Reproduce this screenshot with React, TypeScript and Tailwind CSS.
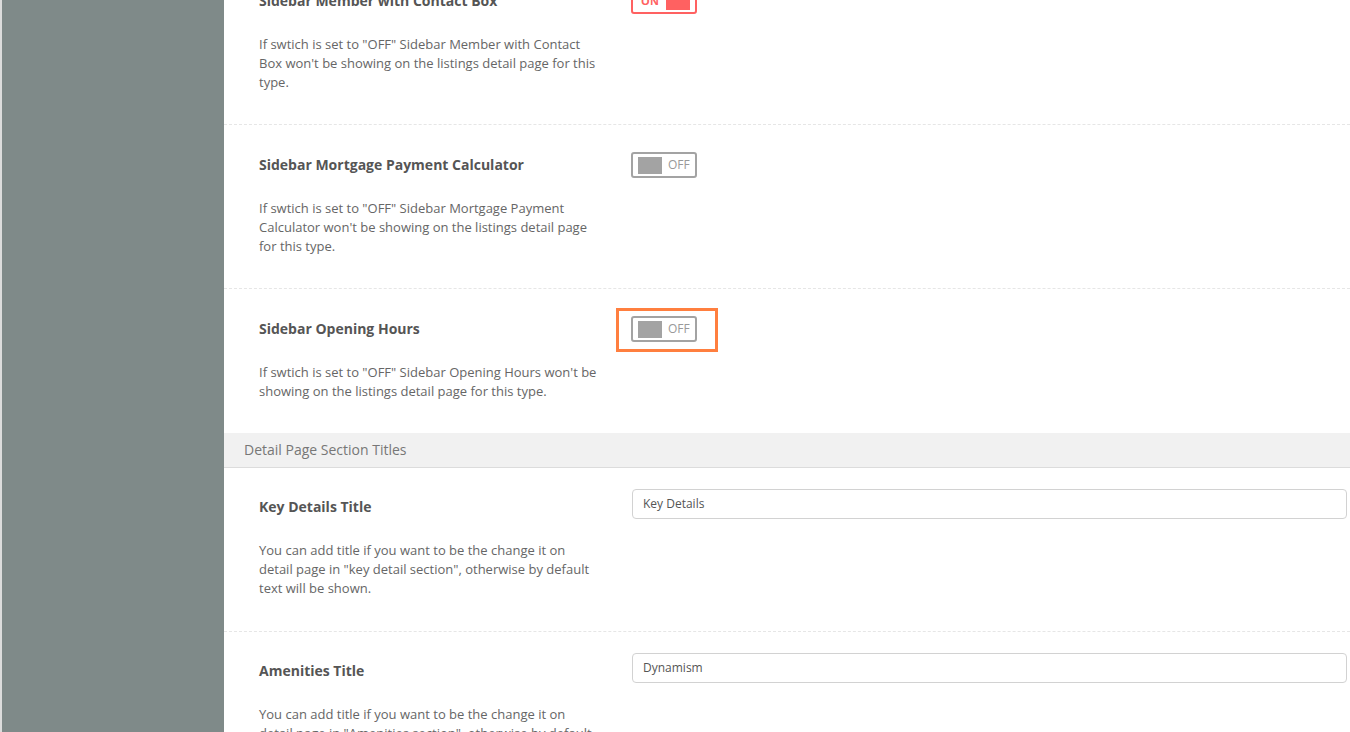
const font = { fontFamily: "'Open Sans', sans-serif" };

type Row = {
  title: string;
  desc: string;
  kind: "on" | "off" | "input";
  value?: string;
  highlight?: boolean;
};

const topRows: Row[] = [
  {
    title: "Sidebar Member with Contact Box",
    desc: 'If swtich is set to "OFF" Sidebar Member with Contact Box won\'t be showing on the listings detail page for this type.',
    kind: "on",
  },
  {
    title: "Sidebar Mortgage Payment Calculator",
    desc: 'If swtich is set to "OFF" Sidebar Mortgage Payment Calculator won\'t be showing on the listings detail page for this type.',
    kind: "off",
  },
  {
    title: "Sidebar Opening Hours",
    desc: 'If swtich is set to "OFF" Sidebar Opening Hours won\'t be showing on the listings detail page for this type.',
    kind: "off",
    highlight: true,
  },
];

const titleRows: Row[] = [
  {
    title: "Key Details Title",
    desc: 'You can add title if you want to be the change it on detail page in "key detail section", otherwise by default text will be shown.',
    kind: "input",
    value: "Key Details",
  },
  {
    title: "Amenities Title",
    desc: 'You can add title if you want to be the change it on detail page in "Amenities section", otherwise by default text will be shown.',
    kind: "input",
    value: "Dynamism",
  },
];

function Toggle({ on }: { on: boolean }) {
  if (on) {
    return (
      <div className="w-[66px] h-[26px] border-2 border-[#ff6161] rounded-[3px] flex items-center justify-between pl-[8px] pr-[5px]">
        <span className="text-[11px] font-bold text-[#ff6161] tracking-wide" style={font}>
          ON
        </span>
        <div className="w-[24px] h-[17px] bg-[#ff6161]" />
      </div>
    );
  }
  return (
    <div className="w-[66px] h-[26px] border-2 border-[#a3a3a3] rounded-[3px] flex items-center pl-[5px] gap-[6px]">
      <div className="w-[24px] h-[17px] bg-[#a3a3a3]" />
      <span className="text-[12px] text-[#999]" style={font}>
        OFF
      </span>
    </div>
  );
}

function SettingRow({ row, last }: { row: Row; last?: boolean }) {
  const isInput = row.kind === "input";
  return (
    <div
      className={`flex pl-[35px] pr-[3px] ${isInput ? "pt-[29px] pb-[33px]" : "pt-[30px] pb-[32px]"} ${
        last ? "" : "border-b border-dashed border-[#e6e6e6]"
      }`}
    >
      <div className="w-[340px] shrink-0">
        <h3 className="text-[14px] leading-[20px] font-bold text-[#555]" style={font}>
          {row.title}
        </h3>
        <p className="mt-[24px] text-[13px] leading-[19px] text-[#666]" style={font}>
          {row.desc}
        </p>
      </div>
      <div className="flex-1 ml-[32px]">
        {isInput ? (
          <div
            className="-mt-[8px] ml-px h-[30px] border border-[#d2d2d2] rounded-[4px] flex items-center px-[10px] text-[12px] text-[#555]"
            style={font}
          >
            {row.value}
          </div>
        ) : (
          <div className="relative -mt-[3px] w-[66px]">
            <Toggle on={row.kind === "on"} />
            {row.highlight && (
              <div className="absolute -left-[15px] -top-[8px] w-[102px] h-[44px] border-[3px] border-[#ff7f3f]" />
            )}
          </div>
        )}
      </div>
    </div>
  );
}

export default function App() {
  return (
    <div className="w-[1350px] h-[732px] overflow-hidden flex bg-white">
      <div className="w-[2px] shrink-0 bg-[#dcdcdc]" />
      <div className="w-[222px] shrink-0 bg-[#7f8a89]" />
      <div className="flex-1 -mt-[39px]">
        {topRows.map((row, i) => (
          <SettingRow key={row.title} row={row} last={i === topRows.length - 1} />
        ))}
        <div
          className="h-[35px] bg-[#f1f1f1] border-b border-[#dcdcdc] flex items-center pl-[20px] pb-[2px] text-[14px] text-[#777]"
          style={font}
        >
          Detail Page Section Titles
        </div>
        {titleRows.map((row) => (
          <SettingRow key={row.title} row={row} />
        ))}
      </div>
    </div>
  );
}
